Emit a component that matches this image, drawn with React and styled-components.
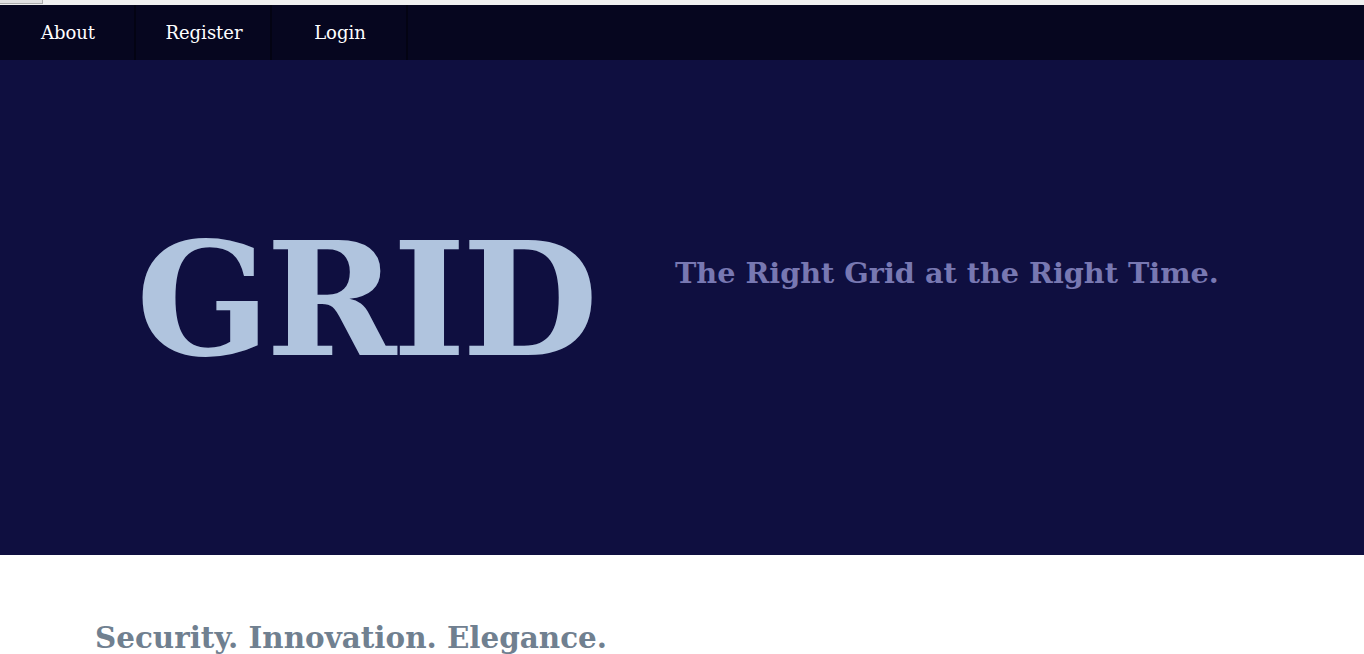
import React from "react";
import styled, { createGlobalStyle } from "styled-components";

const GlobalStyle = createGlobalStyle`
  html, body {
    margin: 0;
    padding: 0;
    background: #ffffff;
    overflow: hidden;
  }
  body {
    font-family: "DejaVu Serif", "Liberation Serif", serif;
  }
`;

const upArrow = `url("data:image/svg+xml;utf8,<svg xmlns='http://www.w3.org/2000/svg' width='14' height='17'><path d='M3 10 L7 6 L11 10' fill='none' stroke='%23a3a3a3' stroke-width='1'/></svg>")`;
const downArrow = `url("data:image/svg+xml;utf8,<svg xmlns='http://www.w3.org/2000/svg' width='14' height='17'><path d='M3 7 L7 11 L11 7' fill='none' stroke='%23a3a3a3' stroke-width='1'/></svg>")`;

// ---------- Page scroller ----------
const Page = styled.div`
  height: 100vh;
  overflow-y: scroll;

  &::-webkit-scrollbar {
    width: 14px;
    background: #e8e8e8;
  }
  &::-webkit-scrollbar-thumb {
    background: #bdbdbd;
  }
  &::-webkit-scrollbar-button:single-button {
    display: block;
    height: 17px;
    background-color: #e8e8e8;
    background-repeat: no-repeat;
    background-position: center;
  }
  &::-webkit-scrollbar-button:single-button:vertical:decrement {
    background-image: ${upArrow};
  }
  &::-webkit-scrollbar-button:single-button:vertical:increment {
    background-image: ${downArrow};
  }
`;

// ---------- Top strip ----------
const TopStrip = styled.div`
  height: 5px;
  background: #f0f0f0;
  display: flex;
  align-items: flex-start;
`;

const StubButton = styled.div`
  width: 42px;
  height: 3px;
  background: #e1e1e1;
  border-right: 1px solid #adadad;
  border-bottom: 1px solid #adadad;
`;

// ---------- Nav ----------
const NavBar = styled.nav`
  display: flex;
  height: 55px;
  background: #06061f;
`;

const NavItem = styled.a`
  display: flex;
  align-items: center;
  justify-content: center;
  width: ${(p) => p.width}px;
  height: 100%;
  box-sizing: border-box;
  border-right: 2px solid #030313;
  color: #ffffff;
  font-size: 18px;
  text-decoration: none;
  padding-left: 2px;
`;

// ---------- Hero ----------
const Hero = styled.header`
  display: grid;
  grid-template-columns: 675px 1fr;
  height: 495px;
  background: #0f0f40;
`;

const LogoCol = styled.div`
  display: flex;
  align-items: center;
  padding-left: 136px;
  padding-bottom: 14px;
`;

const Logo = styled.h1`
  margin: 0;
  font-size: 157px;
  font-weight: bold;
  color: #b0c4de;
  line-height: 1;
  letter-spacing: -4px;
`;

const TagCol = styled.div`
  padding-top: 196px;
`;

const Tagline = styled.h2`
  margin: 0;
  font-size: 28.7px;
  font-weight: bold;
  color: #7878b2;
  line-height: 1.2;
`;

// ---------- Content ----------
const Section = styled.section`
  min-height: 600px;
  padding: 65px 95px 0;
`;

const Heading = styled.h2`
  margin: 0;
  font-size: 29.4px;
  font-weight: bold;
  color: #708090;
  line-height: 1.2;
`;

export default function App() {
  return (
    <>
      <GlobalStyle />
      <Page>
        <TopStrip>
          <StubButton />
        </TopStrip>
        <NavBar>
          <NavItem href="#" width={136}>About</NavItem>
          <NavItem href="#" width={136}>Register</NavItem>
          <NavItem href="#" width={136}>Login</NavItem>
        </NavBar>
        <Hero>
          <LogoCol>
            <Logo>GRID</Logo>
          </LogoCol>
          <TagCol>
            <Tagline>The Right Grid at the Right Time.</Tagline>
          </TagCol>
        </Hero>
        <Section>
          <Heading>Security. Innovation. Elegance.</Heading>
        </Section>
      </Page>
    </>
  );
}
